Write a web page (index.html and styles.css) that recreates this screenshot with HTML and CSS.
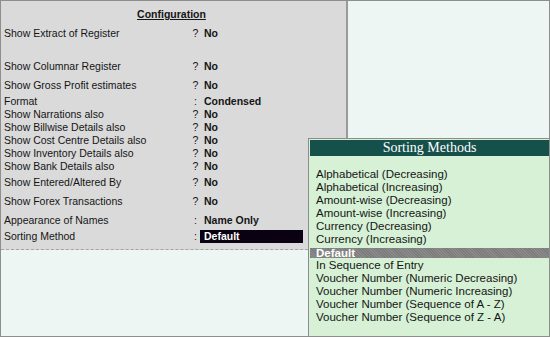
FILE: index.html
```html
<!doctype html>
<html lang="en">

<head>
    <meta charset="utf-8" />
    <title>Configuration - Sorting Methods</title>
    <link rel="stylesheet" href="styles.css">
</head>

<body>
    <div class="screen">
        <div class="config-panel">
            <div class="config-title"><span>Configuration</span></div>

            <div class="row gap-m">
                <span class="label">Show Extract of Register</span><span class="mark">?</span><span class="value">No</span>
            </div>
            <div class="row gap-l">
                <span class="label">Show Columnar Register</span><span class="mark">?</span><span class="value">No</span>
            </div>
            <div class="row gap-m">
                <span class="label">Show Gross Profit estimates</span><span class="mark">?</span><span class="value">No</span>
            </div>
            <div class="row gap-s">
                <span class="label">Format</span><span class="mark">:</span><span class="value">Condensed</span>
            </div>
            <div class="row">
                <span class="label">Show Narrations also</span><span class="mark">?</span><span class="value">No</span>
            </div>
            <div class="row">
                <span class="label">Show Billwise Details also</span><span class="mark">?</span><span class="value">No</span>
            </div>
            <div class="row">
                <span class="label">Show Cost Centre Details also</span><span class="mark">?</span><span class="value">No</span>
            </div>
            <div class="row">
                <span class="label">Show Inventory Details also</span><span class="mark">?</span><span class="value">No</span>
            </div>
            <div class="row">
                <span class="label">Show Bank Details also</span><span class="mark">?</span><span class="value">No</span>
            </div>
            <div class="row gap-s">
                <span class="label">Show Entered/Altered By</span><span class="mark">?</span><span class="value">No</span>
            </div>
            <div class="row gap-m">
                <span class="label">Show Forex Transactions</span><span class="mark">?</span><span class="value">No</span>
            </div>
            <div class="row gap-m">
                <span class="label">Appearance of Names</span><span class="mark">:</span><span class="value">Name Only</span>
            </div>
            <div class="row gap-s">
                <span class="label">Sorting Method</span><span class="mark">:</span><span class="value selected">Default</span>
            </div>
        </div>

        <div class="sort-popup">
            <div class="sort-title">Sorting Methods</div>
            <ul class="sort-list">
                <li>Alphabetical (Decreasing)</li>
                <li>Alphabetical (Increasing)</li>
                <li>Amount-wise (Decreasing)</li>
                <li>Amount-wise (Increasing)</li>
                <li>Currency (Decreasing)</li>
                <li>Currency (Increasing)</li>
                <li class="active">Default</li>
                <li>In Sequence of Entry</li>
                <li>Voucher Number (Numeric Decreasing)</li>
                <li>Voucher Number (Numeric Increasing)</li>
                <li>Voucher Number (Sequence of A - Z)</li>
                <li>Voucher Number (Sequence of Z - A)</li>
            </ul>
        </div>
    </div>
</body>

</html>
```

FILE: styles.css
```css
body {
    margin: 0;
    font-family: "Liberation Sans", Arial, sans-serif;
    color: #151515;
}

.screen {
    position: relative;
    width: 548px;
    height: 335px;
    border: 1px solid #8e8e8e;
    background-color: #eef6f4;
    overflow: hidden;
}

.config-panel {
    width: 342px;
    padding: 7px 0 6px 3px;
    background-color: #dadada;
    border-right: 2px solid #9a9a9a;
    border-bottom: 1px dashed #a4a4a4;
    font-size: 10.5px;
}

.config-title {
    height: 13px;
    line-height: 13px;
    padding-right: 7px;
    text-align: center;
    font-weight: bold;
}

.config-title span {
    text-decoration: underline;
    text-underline-offset: 1px;
}

.row {
    display: grid;
    grid-template-columns: 187px 9px 103px;
    height: 13px;
    line-height: 13px;
}

.gap-s {
    margin-top: 3px;
}

.gap-m {
    margin-top: 6px;
}

.gap-l {
    margin-top: 20px;
}

.mark {
    text-align: center;
}

.value {
    padding-left: 4px;
    font-weight: bold;
}

.value.selected {
    background-color: #0a0212;
    color: white;
}

/* popup list overlaying the screen */
.sort-popup {
    position: absolute;
    left: 307px;
    top: 137px;
    right: 0;
    bottom: 0;
    background-color: #d6f1d5;
    border: 1px solid #8c8c8c;
    border-right: none;
    border-bottom: none;
}

.sort-title {
    height: 16px;
    line-height: 16px;
    margin: 1px 0 0 1px;
    background-color: #15504a;
    color: white;
    text-align: center;
    font-family: "Liberation Serif", "Times New Roman", serif;
    font-size: 14px;
}

.sort-list {
    list-style: none;
    margin: 12px 0 0 0;
    padding: 0;
    font-size: 11.5px;
}

.sort-list li {
    height: 13px;
    line-height: 13px;
    padding-left: 7px;
}

.sort-list li.active {
    height: 10px;
    line-height: 10px;
    margin: 2px 0 1px 1px;
    padding-left: 6px;
    background: repeating-linear-gradient(45deg, #8a8a8a 0 1px, #7c7c7c 1px 2px);
    color: white;
    font-weight: bold;
}
```
